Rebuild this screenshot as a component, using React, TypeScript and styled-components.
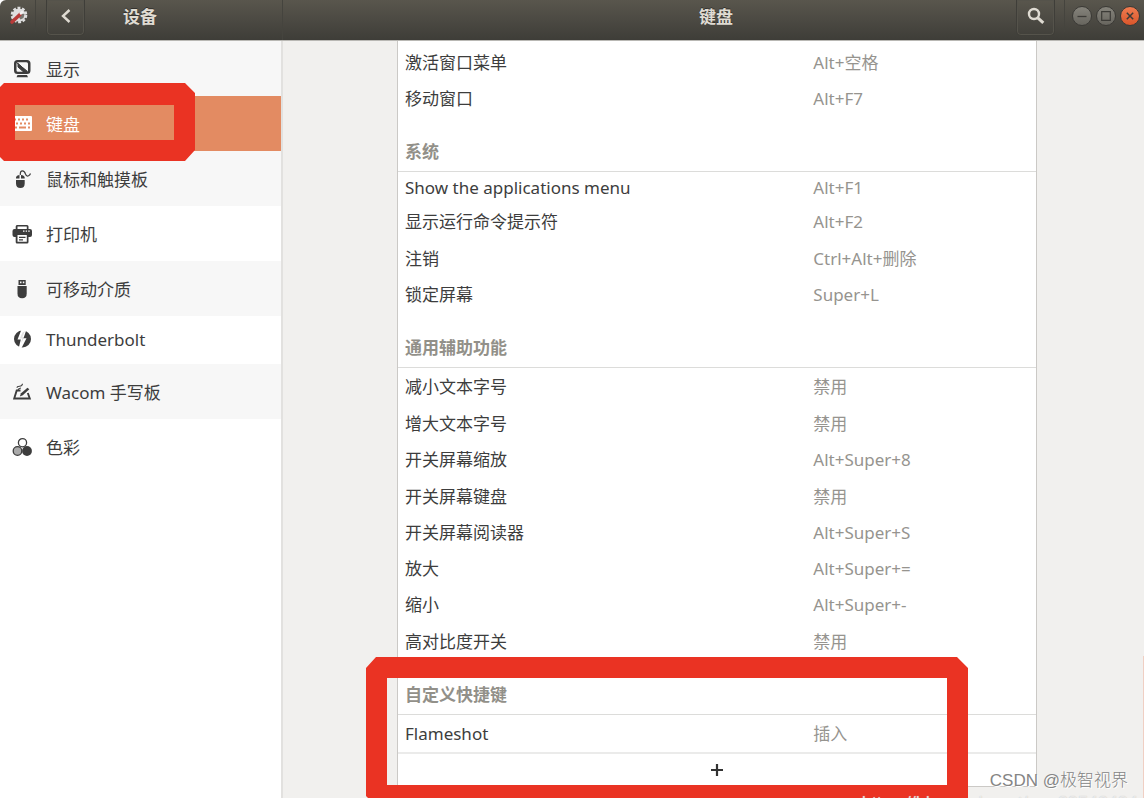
import React from 'react';
import styled, { createGlobalStyle } from 'styled-components';

const GlobalStyle = createGlobalStyle`
  * { box-sizing: border-box; }
  body {
    margin: 0;
    background: #fff;
    color: #3d3d3d;
    font-family: "Noto Sans", "Noto Sans CJK SC", sans-serif;
    font-size: 17px;
    line-height: 24px;
  }
  button { font: inherit; color: inherit; cursor: pointer; }
`;

const Window = styled.div`
  position: relative;
  display: flex;
  flex-direction: column;
  height: 100vh;
  overflow: hidden;
`;

const HeaderBar = styled.header`
  display: flex;
  flex: none;
  height: 41px;
  color: #dfdbd2;
  background: linear-gradient(#59564d, #3e3d38);
  border-bottom: 1px solid #b9b8b4;
  border-top-left-radius: 6px;
`;

const HeaderSide = styled.div`
  display: flex;
  width: 283px;
  flex: none;
  padding-left: 9px;
  border-right: 1px solid #45443e;
`;

const HeaderMain = styled.div`
  display: grid;
  grid-template-columns: 1fr auto 1fr;
  flex: 1;
  padding-left: 5px;
`;

const AppLogo = styled.span`
  height: 32px;
  padding-top: 6px;
  padding-right: 7px;
  margin-right: 10px;
  border-right: 1px solid #45443e;
`;

const HeaderButton = styled.button`
  display: flex;
  align-items: center;
  justify-content: center;
  width: 39px;
  height: 36px;
  padding: 0 0 4px;
  background: transparent;
  border: 1px solid #3f3e39;
  border-top: 0;
  border-radius: 0 0 5px 5px;
  box-shadow: inset 0 0 0 1px #55534b;
`;

const Title = styled.h1`
  margin: 0;
  font-size: 17px;
  line-height: 33px;
  font-weight: 700;
  text-shadow: 0 -1px #33322e;
`;

const SideTitle = styled(Title)`
  padding-left: 38px;
`;

const HeaderEnd = styled.div`
  display: flex;
  grid-column: 3;
  justify-self: end;
  padding-right: 4px;
`;

const WindowControls = styled.div`
  display: flex;
  gap: 4px;
  height: 32px;
  margin-left: 9px;
  padding: 6px 0 0 7px;
  border-left: 1px solid #45443e;
`;

const WindowButton = styled.button<{ $close?: boolean }>`
  display: block;
  width: 20px;
  height: 20px;
  padding: 0;
  color: #3c3b37;
  border: 1px solid #3b3a36;
  border-radius: 50%;
  background: ${p => (p.$close ? 'linear-gradient(#f07c50, #d9562b)' : 'linear-gradient(#85837b, #67655e)')};
  svg { display: block; }
`;

const Body = styled.div`
  display: flex;
  flex: 1;
  min-height: 0;
`;

const Sidebar = styled.nav`
  flex: none;
  width: 283px;
  background: #fff;
  border-right: 2px solid #e2e1df;
`;

const NavList = styled.ul`
  margin: 0;
  padding: 0;
  list-style: none;
`;

const NavItem = styled.li<{ $active?: boolean }>`
  position: relative;
  background: ${p => (p.$active ? '#e38b62' : 'transparent')};
  color: ${p => (p.$active ? '#fff' : 'inherit')};
  &:nth-child(odd) { background: #f7f7f7; }
`;

const NavLink = styled.a<{ $compact?: boolean }>`
  display: flex;
  align-items: center;
  gap: 15px;
  height: ${p => (p.$compact ? 48 : 55)}px;
  padding: ${p => (p.$compact ? 0 : 2)}px 0 0 13px;
  color: inherit;
  text-decoration: none;
  svg { flex: none; margin-bottom: 2px; }
`;

const Content = styled.main`
  flex: 1;
  min-width: 0;
  padding: 0 16px 0 23px;
  background: #f1f0ee;
`;

const Panel = styled.section`
  position: relative;
  max-width: 640px;
  margin: 0 auto;
  padding-top: 3px;
  background: #fff;
  border: 1px solid #cbc9c6;
  border-top: 0;
`;

const Shortcuts = styled.table`
  width: 100%;
  table-layout: fixed;
  border-collapse: separate;
  border-spacing: 0;
  text-align: left;
`;

const NameColumn = styled.col`
  width: 64%;
`;

const SectionHead = styled.th`
  height: 55px;
  padding: 0 7px 7px;
  vertical-align: bottom;
  font-weight: 700;
  color: #929089;
  border-bottom: 1px solid #dcdcda;
`;

const Row = styled.tr<{ $height: number }>`
  height: ${p => p.$height}px;
`;

const NameCell = styled.th`
  padding: 0 7px;
  font-weight: 400;
`;

const KeysCell = styled.td`
  padding: 0 7px;
  color: #96948f;
`;

const AddButton = styled.button`
  display: flex;
  align-items: center;
  justify-content: center;
  width: 100%;
  height: 34px;
  padding: 0;
  background: #fff;
  border: 0;
  border-top: 2px solid #ebebea;
`;

const NavMark = styled.svg`
  position: absolute;
  z-index: 2;
  top: -13px;
  left: 0;
  pointer-events: none;
`;

const PanelMark = styled.svg`
  position: absolute;
  z-index: 2;
  bottom: -12px;
  left: -32px;
  pointer-events: none;
`;

const ScrollEdge = styled.span`
  position: absolute;
  top: 656px;
  right: 0;
  bottom: 0;
  width: 1px;
  background: #f0cfc3;
`;

const Watermark = styled.span`
  position: absolute;
  z-index: 3;
  right: 16px;
  bottom: 5px;
  color: #858585;
  font-family: "Liberation Sans", "Noto Sans CJK SC", sans-serif;
  font-weight: 300;
  text-shadow: 1px 1px #fff;
  white-space: nowrap;
`;

const SourceLink = styled.a`
  position: absolute;
  z-index: 3;
  right: 6px;
  bottom: -17px;
  color: rgba(255, 255, 255, 0.65);
  font-family: "Liberation Sans", sans-serif;
  font-size: 18px;
  text-decoration: none;
  text-shadow: 0 0 1px #bbb;
  white-space: nowrap;
`;

function Icon({ children }: { children: React.ReactNode }) {
  return (
    <svg width="18" height="18" viewBox="0 0 18 18" fill="currentColor" overflow="visible" aria-hidden="true">
      {children}
    </svg>
  );
}

const DisplayIcon = () => (
  <Icon>
    <path fillRule="evenodd" d="M4 0h10q3.500 0 3.500 3.500v7q0 3.500-3.500 3.500H4.500Q1 14 1 10.500v-7Q1 0 4.500 0zm1 2.200q-1.500 0-1.500 1.500v6.600q0 1.500 1.500 1.500h8.500q1.500 0 1.500-1.500V3.700q0-1.500-1.500-1.500z" />
    <path d="M4 3l10.500 8.500M5 3.500V7l5 4.500h4z" stroke="currentColor" strokeWidth="1" />
    <path d="M4.500 15h9.500l1 2.300H3.500z" />
  </Icon>
);

const KeyboardIcon = () => (
  <Icon>
    <path fillRule="evenodd" d="M1 1h17q1 0 1 1v13q0 1-1 1H0V2q0-1 1-1zM1 3.500v2h2v-2zm4 0v2h2v-2zm4 0v2h2v-2zm4 0v2h2v-2zM3 7.500v2h2v-2zm4 0v2h2v-2zm4 0v2h2v-2zm4 0v2h2v-2zM2 11.500v2h2v-2zm4 0v2h7v-2zm9 0v2h2v-2z" />
  </Icon>
);

const MouseIcon = () => (
  <Icon>
    <path d="M3 7.500q.5-2.500 3.500-2.500v3.500H3zM8 5q3.200 0 3.700 2.500v1H8zM3 10h8.700v3.500q0 4.500-4.300 4.500T3 13.500z" />
    <path d="M7.300 5Q7 .8 9.500.8 11.500.800 12.500 4q1 2.700 3 1.800Q17 5 17.500 3.500" fill="none" stroke="currentColor" strokeWidth="1.200" />
  </Icon>
);

const PrinterIcon = () => (
  <Icon>
    <path fillRule="evenodd" d="M4 0h10q1.500 0 1.500 1.500V4H17q2 0 2 2v4q0 2-2 2h-1.500v5q0 1.500-1.500 1.500H4Q2.700 18.500 2.700 17v-5H1.500Q-.5 12-.5 10V6q0-2 2-2h1.200V1.500Q2.700 0 4 0zm.500 1.500V4h9.300V1.500zm0 8.500v6.800h9.300V10zM10 5.500v1.300h1.500V5.500zm2.700 0v1.300H14V5.500zm2.500 0v1.300h1.500V5.500z" />
    <path d="M6 11.800h6.500V13H6zm0 2.500h4v1.200H6z" />
  </Icon>
);

const UsbIcon = () => (
  <Icon>
    <path fillRule="evenodd" d="M5.500 0h7.200v5H5.500zm1.500 1.500v1.800h1.500V1.500zm2.800 0v1.800h1.500V1.500z" />
    <path d="M4.500 6h9.200v7.500q0 4.800-4.600 4.800t-4.600-4.800z" />
  </Icon>
);

const ThunderboltIcon = () => (
  <Icon>
    <circle cx="9.500" cy="9" r="8.500" />
    <path d="M8.500-.5L4.500 9.500h3.300L5.500 19l3.300-1.500 4.700-9.300h-3L13.500-.5z" fill="#fff" />
    <path d="M9.500 2.500L6.800 8.500h2.500L8 13.500l3.500-6.300H9.300L12 1z" opacity=".15" />
  </Icon>
);

const TabletIcon = () => (
  <Icon>
    <path d="M7.500 7.500H3.700L1.200 15.500h15.600L14.800 10" fill="none" stroke="currentColor" strokeWidth="1.900" />
    <path d="M6.800 13.500l1.200-3.200 6.500-5.500 1.800 1.500-6.500 6z" />
    <path d="M4 4.700q0-1.500 2.500-1.500 2.700 0 3-2.500M5 7q.5-1.800 3-2" fill="none" stroke="currentColor" strokeWidth="1.100" />
  </Icon>
);

const ColorIcon = () => (
  <Icon>
    <circle cx="9.500" cy="4.700" r="4.100" fill="#fff" stroke="currentColor" strokeWidth="1.300" />
    <circle cx="4.500" cy="13" r="4.300" fill="#aaa" stroke="currentColor" strokeWidth="1.300" />
    <circle cx="14" cy="13" r="4.900" />
  </Icon>
);

const SettingsLogo = () => (
  <svg width="19" height="20" viewBox="0 0 19 20" aria-hidden="true">
    <circle cx="10" cy="9" r="6.600" fill="#dedede" />
    <circle cx="10" cy="9" r="7.200" fill="none" stroke="#dedede" strokeWidth="2.200" strokeDasharray="2.900 1.700" />
    <path d="M10 11.500l2.500-4 3 .5-1 4-3 1.500z" fill="#77756f" />
    <path d="M3 16l8-7.500" stroke="#b83b39" strokeWidth="3.600" strokeLinecap="round" />
    <path d="M11 8l3-2.500" fill="none" stroke="#f2f2f2" strokeWidth="2.600" />
  </svg>
);

type NavEntry = { label: string; icon: () => React.ReactElement; active?: boolean; compact?: boolean };

const navEntries: NavEntry[] = [
  { label: '显示', icon: DisplayIcon },
  { label: '键盘', icon: KeyboardIcon, active: true },
  { label: '鼠标和触摸板', icon: MouseIcon },
  { label: '打印机', icon: PrinterIcon },
  { label: '可移动介质', icon: UsbIcon },
  { label: 'Thunderbolt', icon: ThunderboltIcon, compact: true },
  { label: 'Wacom 手写板', icon: TabletIcon },
  { label: '色彩', icon: ColorIcon },
];

type Section = { title?: string; rows: [name: string, keys: string][] };

const sections: Section[] = [
  { rows: [['激活窗口菜单', 'Alt+空格'], ['移动窗口', 'Alt+F7']] },
  {
    title: '系统',
    rows: [
      ['Show the applications menu', 'Alt+F1'],
      ['显示运行命令提示符', 'Alt+F2'],
      ['注销', 'Ctrl+Alt+删除'],
      ['锁定屏幕', 'Super+L'],
    ],
  },
  {
    title: '通用辅助功能',
    rows: [
      ['减小文本字号', '禁用'],
      ['增大文本字号', '禁用'],
      ['开关屏幕缩放', 'Alt+Super+8'],
      ['开关屏幕键盘', '禁用'],
      ['开关屏幕阅读器', 'Alt+Super+S'],
      ['放大', 'Alt+Super+='],
      ['缩小', 'Alt+Super+-'],
      ['高对比度开关', '禁用'],
    ],
  },
  { title: '自定义快捷键', rows: [['Flameshot', '插入']] },
];

// Rows grow with the script they hold: Latin only, Chinese name, Chinese keys.
const hasHan = (text: string) => /[\u4e00-\u9fff]/.test(text);
const rowHeight = (name: string, keys: string) => (hasHan(keys) ? 37 : hasHan(name) ? 36 : 32);

export default function App() {
  return (
    <Window>
      <GlobalStyle />
      <HeaderBar>
        <HeaderSide>
          <AppLogo><SettingsLogo /></AppLogo>
          <HeaderButton aria-label="返回">
            <svg width="12" height="16" viewBox="0 0 12 16" fill="none" stroke="currentColor" strokeWidth="2.400" aria-hidden="true">
              <path d="M9.500 2L3 8l6.500 6" />
            </svg>
          </HeaderButton>
          <SideTitle as="h2">设备</SideTitle>
        </HeaderSide>
        <HeaderMain>
          <span />
          <Title>键盘</Title>
          <HeaderEnd>
            <HeaderButton aria-label="搜索">
              <svg width="18" height="18" viewBox="0 0 18 18" fill="none" stroke="currentColor" aria-hidden="true">
                <circle cx="7" cy="7" r="5" strokeWidth="2.400" />
                <path d="M10.800 10.800l5.500 5" strokeWidth="3" />
              </svg>
            </HeaderButton>
            <WindowControls>
              <WindowButton aria-label="最小化">
                <svg width="18" height="18" viewBox="0 0 18 18" aria-hidden="true"><path d="M4.500 9.500h9" stroke="currentColor" strokeWidth="1.300" /></svg>
              </WindowButton>
              <WindowButton aria-label="最大化">
                <svg width="18" height="18" viewBox="0 0 18 18" aria-hidden="true"><path d="M4.700 4.700h8.600v8.600H4.700z" fill="none" stroke="currentColor" strokeWidth="1.200" /></svg>
              </WindowButton>
              <WindowButton $close aria-label="关闭">
                <svg width="18" height="18" viewBox="0 0 18 18" aria-hidden="true"><path d="M5.800 5.800l6.400 6.400m0-6.400l-6.400 6.400" stroke="currentColor" strokeWidth="1.500" /></svg>
              </WindowButton>
            </WindowControls>
          </HeaderEnd>
        </HeaderMain>
      </HeaderBar>

      <Body>
        <Sidebar>
          <NavList>
            {navEntries.map(({ label, icon: NavIcon, active, compact }) => (
              <NavItem key={label} $active={active}>
                <NavLink href="#" $compact={compact} aria-current={active ? 'page' : undefined}>
                  <NavIcon />
                  {label}
                </NavLink>
                {active && (
                  <NavMark width="195" height="78" viewBox="0 0 195 78" aria-hidden="true">
                    <path fill="#ea3323" fillRule="evenodd" d="M4 0h181l10 10v57l-10 11H4l-4-4V4zM15 22v35h159V22z" />
                  </NavMark>
                )}
              </NavItem>
            ))}
          </NavList>
        </Sidebar>

        <Content>
          <Panel>
            <Shortcuts>
              <colgroup>
                <NameColumn />
                <col />
              </colgroup>
              {sections.map((section, i) => (
                <tbody key={i}>
                  {section.title && (
                    <tr>
                      <SectionHead colSpan={2} scope="rowgroup">{section.title}</SectionHead>
                    </tr>
                  )}
                  {section.rows.map(([name, keys]) => (
                    <Row key={name} $height={rowHeight(name, keys)}>
                      <NameCell scope="row">{name}</NameCell>
                      <KeysCell>{keys}</KeysCell>
                    </Row>
                  ))}
                </tbody>
              ))}
            </Shortcuts>
            <AddButton aria-label="添加快捷键">
              <svg width="14" height="14" viewBox="0 0 14 14" aria-hidden="true">
                <path d="M7 1v12M1 7h12" stroke="#333" strokeWidth="2.200" />
              </svg>
            </AddButton>
            <PanelMark width="602" height="141" viewBox="0 0 602 141" aria-hidden="true">
              <path fill="#ea3323" fillRule="evenodd" d="M10 0h581l11 11v130H2l-2-2V11zM21 21v107h560V21z" />
            </PanelMark>
          </Panel>
        </Content>
      </Body>

      <ScrollEdge />
      <Watermark>CSDN @极智视界</Watermark>
      <SourceLink href="#">https://blog.csdn.net/qq_39542494</SourceLink>
    </Window>
  );
}
